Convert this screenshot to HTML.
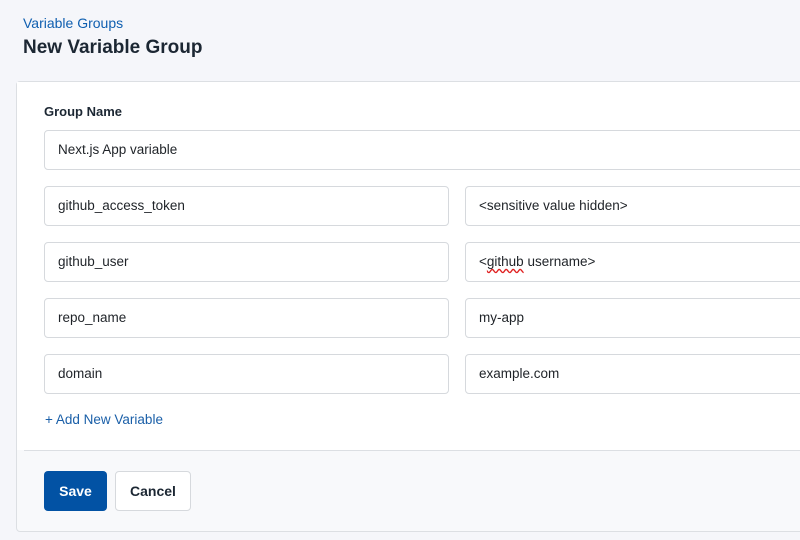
<!DOCTYPE html>
<html><head><style>
*{box-sizing:border-box;margin:0;padding:0}
body{width:800px;height:540px;overflow:hidden;background:#f5f6fa;font-family:"Liberation Sans",Arial,sans-serif;color:#1f2328;position:relative}
.abs{position:absolute}
.crumb{left:23px;top:15px;font-size:14px;color:#0f5fb0}
.title{left:23px;top:37px;font-size:19px;font-weight:bold;color:#1c2733}
.card{left:16px;top:81px;width:800px;height:451px;background:#f8f9fb;border:1px solid #dcdfe3;border-radius:4px}
.top{left:17px;top:82px;width:790px;height:368px;background:#fff}
.div{left:24px;top:450px;width:790px;height:1px;background:#dcdfe3}
.lbl{left:44px;top:104px;font-size:13px;font-weight:bold;color:#1c2733}
.in{position:absolute;height:40px;border:1px solid #d6d9dd;border-radius:4px;background:#fff;font-size:13.5px;padding-left:13px;line-height:38px;color:#1f2328}
.add{left:45px;top:412px;font-size:13.5px;color:#1a5fa8}
.btn{position:absolute;top:471px;height:40px;border-radius:4px;font-size:14px;font-weight:bold;text-align:center;line-height:40px}
.save{left:44px;width:63px;background:#0252a4;color:#fff}
.cancel{left:115px;width:76px;background:#fff;border:1px solid #d6d9dd;line-height:38px;color:#1c2733}
.sq{text-decoration:underline wavy #e02020;text-underline-offset:2px;text-decoration-skip-ink:none}
</style></head><body>
<div class="abs crumb">Variable Groups</div>
<div class="abs title">New Variable Group</div>
<div class="abs card"></div>
<div class="abs top"></div>
<div class="abs div"></div>
<div class="abs lbl">Group Name</div>
<div class="in" style="left:44px;top:130px;width:780px">Next.js App variable</div>
<div class="in" style="left:44px;top:186px;width:405px">github_access_token</div>
<div class="in" style="left:465px;top:186px;width:360px">&lt;sensitive value hidden&gt;</div>
<div class="in" style="left:44px;top:242px;width:405px">github_user</div>
<div class="in" style="left:465px;top:242px;width:360px">&lt;<span class="sq">github</span> username&gt;</div>
<div class="in" style="left:44px;top:298px;width:405px">repo_name</div>
<div class="in" style="left:465px;top:298px;width:360px">my-app</div>
<div class="in" style="left:44px;top:354px;width:405px">domain</div>
<div class="in" style="left:465px;top:354px;width:360px">example.com</div>
<div class="abs add">+ Add New Variable</div>
<div class="btn save">Save</div>
<div class="btn cancel">Cancel</div>
</body></html>
